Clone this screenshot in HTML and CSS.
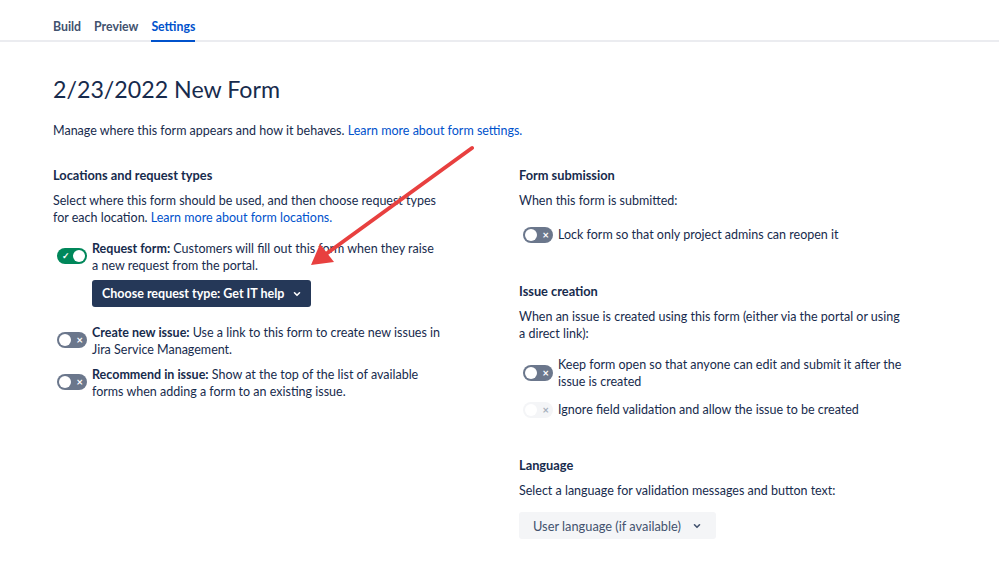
FILE: index.html
```html
<!DOCTYPE html>
<html lang="en">
<head>
    <meta charset="UTF-8" />
    <title>Form settings</title>
    <link rel="stylesheet" href="styles.css">
</head>
<body>

<nav class="tabs">
    <a class="tab">Build</a>
    <a class="tab">Preview</a>
    <a class="tab active">Settings</a>
</nav>

<main class="page">
    <h1 class="title">2/23/2022 New Form</h1>
    <p class="intro">Manage where this form appears and how it behaves. <a class="link">Learn more about form settings.</a></p>

    <div class="columns">
        <section class="col">
            <h3>Locations and request types</h3>
            <p class="desc">Select where this form should be used, and then choose request types for each location. <a class="link">Learn more about form locations.</a></p>

            <div class="option">
                <span class="toggle on"><i class="knob"></i><span class="mark">&#10003;</span></span>
                <div class="option-body">
                    <p><b>Request form:</b> Customers will fill out this form when they raise a new request from the portal.</p>
                    <button class="btn-primary">Choose request type: Get IT help
                        <svg width="10" height="10" viewBox="0 0 10 10"><path d="M2.5 3.8 L5 6.3 L7.5 3.8" fill="none" stroke="currentColor" stroke-width="1.6" stroke-linecap="round" stroke-linejoin="round"/></svg>
                    </button>
                </div>
            </div>

            <div class="option after-btn">
                <span class="toggle"><i class="knob"></i><span class="mark">&times;</span></span>
                <div class="option-body">
                    <p><b>Create new issue:</b> Use a link to this form to create new issues in Jira Service Management.</p>
                </div>
            </div>

            <div class="option tight">
                <span class="toggle"><i class="knob"></i><span class="mark">&times;</span></span>
                <div class="option-body">
                    <p><b>Recommend in issue:</b> Show at the top of the list of available forms when adding a form to an existing issue.</p>
                </div>
            </div>
        </section>

        <section class="col">
            <h3>Form submission</h3>
            <p class="desc">When this form is submitted:</p>
            <div class="option single lock">
                <span class="toggle"><i class="knob"></i><span class="mark">&times;</span></span>
                <div class="option-body"><p>Lock form so that only project admins can reopen it</p></div>
            </div>

            <h3 class="gap-top">Issue creation</h3>
            <p class="desc">When an issue is created using this form (either via the portal or using a direct link):</p>
            <div class="option">
                <span class="toggle mid"><i class="knob"></i><span class="mark">&times;</span></span>
                <div class="option-body"><p>Keep form open so that anyone can edit and submit it after the issue is created</p></div>
            </div>
            <div class="option single ignore">
                <span class="toggle disabled"><i class="knob"></i><span class="mark">&times;</span></span>
                <div class="option-body"><p>Ignore field validation and allow the issue to be created</p></div>
            </div>

            <h3 class="gap-top lang">Language</h3>
            <p class="desc">Select a language for validation messages and button text:</p>
            <button class="btn-select">User language (if available)
                <svg width="10" height="10" viewBox="0 0 10 10"><path d="M2.5 3.8 L5 6.3 L7.5 3.8" fill="none" stroke="currentColor" stroke-width="1.6" stroke-linecap="round" stroke-linejoin="round"/></svg>
            </button>
        </section>
    </div>
</main>

<!-- annotation arrow -->
<svg class="arrow" width="999" height="573" viewBox="0 0 999 573">
    <line x1="472" y1="148" x2="326" y2="254" stroke="#e8403f" stroke-width="4" stroke-linecap="round"/>
    <polygon points="311,265 320,244 334,262" fill="#e8403f"/>
</svg>

</body>
</html>
```

FILE: styles.css
```css
body {
    margin: 0;
    font-family: Lato, "Open Sans", sans-serif;
    font-size: 12.5px;
    color: #172b4d;
    background: #fff;
}
.tabs {
    display: flex;
    gap: 13px;
    padding-left: 53px;
    height: 42px;
    border-bottom: 2px solid #ebecf0;
    box-sizing: border-box;
    align-items: flex-end;
}
.tab {
    font-size: 12.3px;
    font-weight: 700;
    color: #42526e;
    padding-bottom: 6px;
    border-bottom: 2px solid transparent;
    margin-bottom: -2px;
}
.tab.active {
    color: #0052cc;
    border-bottom-color: #0052cc;
}
.page {
    padding: 0 53px;
}
.title {
    font-size: 23.2px;
    font-weight: 400;
    margin: 32px 0 0 0;
    line-height: 30px;
}
.intro {
    margin: 18px 0 0 0;
    line-height: 17px;
}
.link {
    color: #0052cc;
}
.columns {
    display: grid;
    grid-template-columns: 390px 390px;
    gap: 76px;
    margin-top: 28px;
}
h3 {
    font-size: 12.8px;
    font-weight: 700;
    margin: 0;
    line-height: 17px;
}
.gap-top {
    margin-top: 40px;
}
.gap-top.lang {
    margin-top: 39px;
}
.desc {
    margin: 8px 0 0 0;
    line-height: 17px;
}
.option {
    display: flex;
    gap: 5px;
    margin-top: 14px;
    padding-left: 4px;
}
.option.after-btn {
    margin-top: 17px;
}
.option.tight {
    margin-top: 8px;
}
.option.lock {
    margin-top: 17px;
}
.option.ignore {
    margin-top: 11px;
}
.option.single {
    align-items: center;
}
.option p {
    margin: 0;
    line-height: 17px;
}
.option-body {
    flex: 1;
}
.toggle {
    position: relative;
    flex: none;
    width: 30px;
    height: 16px;
    border-radius: 8px;
    background: #6b778c;
    margin-top: 8px;
}
.option.single .toggle {
    margin-top: 0;
}
.toggle.mid {
    margin-top: 9px;
}
.toggle .knob {
    position: absolute;
    top: 2px;
    left: 2px;
    width: 12px;
    height: 12px;
    border-radius: 50%;
    background: #fff;
}
.toggle .mark {
    position: absolute;
    right: 4px;
    top: 0;
    line-height: 16px;
    font-size: 11px;
    font-weight: 700;
    color: #fff;
}
.toggle.on {
    background: #00875a;
}
.toggle.on .knob {
    left: auto;
    right: 2px;
}
.toggle.on .mark {
    right: auto;
    left: 5px;
    font-size: 9px;
}
.toggle.disabled {
    background: #f4f5f7;
}
.toggle.disabled .mark {
    color: #a5adba;
}
.btn-primary {
    margin-top: 6px;
    display: inline-flex;
    align-items: center;
    gap: 8px;
    height: 27px;
    padding: 0 9px 0 10px;
    border: none;
    border-radius: 3px;
    background: #253858;
    color: #fff;
    font-family: inherit;
    font-size: 12.5px;
    font-weight: 700;
}
.btn-select {
    margin-top: 13px;
    display: inline-flex;
    align-items: center;
    gap: 11px;
    height: 27px;
    padding: 0 14px;
    border: none;
    border-radius: 3px;
    background: #f4f5f7;
    color: #42526e;
    font-family: inherit;
    font-size: 12.8px;
}
.arrow {
    position: absolute;
    top: 0;
    left: 0;
    pointer-events: none;
}
```
